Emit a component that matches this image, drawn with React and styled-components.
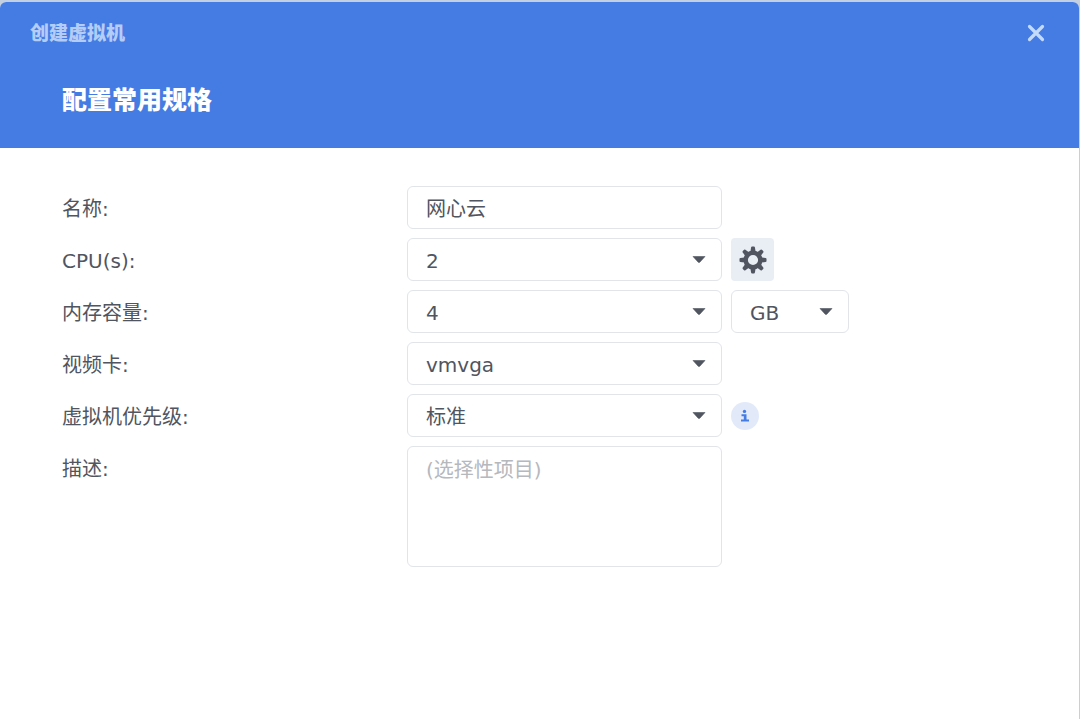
import React from 'react';
import styled, { createGlobalStyle } from 'styled-components';

const GlobalStyle = createGlobalStyle`
  *, *::before, *::after { box-sizing: border-box; }
  body {
    margin: 0;
    background: #c3d0e2;
    color: #505560;
    font-family: "DejaVu Sans", "Noto Sans CJK SC", sans-serif;
    font-size: 20px;
    line-height: 28px;
  }
  button, input, select, textarea { font: inherit; color: inherit; margin: 0; }
`;

const Backdrop = styled.div`
  display: flex;
  min-height: 100vh;
  padding: 2px 1px 0 0;
`;

const Dialog = styled.section`
  flex: 1;
  background: #fff;
  border-radius: 6px 6px 0 0;
  overflow: hidden;
`;

const Header = styled.header`
  background: #457ce3;
  padding: 15px 30px 30px;
`;

const TitleBar = styled.div`
  display: flex;
  align-items: center;
  justify-content: space-between;
  height: 32px;
`;

const DialogTitle = styled.h1`
  margin: 0;
  font-size: 19px;
  font-weight: 900;
  color: #b4cdf7;
`;

const CloseButton = styled.button`
  display: grid;
  place-items: center;
  width: 26px;
  height: 28px;
  padding: 0;
  border: 0;
  background: none;
  cursor: pointer;
`;

const StepTitle = styled.h2`
  margin: 35px 0 0 32px;
  font-size: 25px;
  line-height: 34px;
  font-weight: 900;
  color: #fff;
`;

const Form = styled.form`
  display: flex;
  flex-direction: column;
  gap: 9px;
  padding: 38px 62px;
`;

const Row = styled.div`
  display: flex;
  align-items: flex-start;
  gap: 9px;
`;

const Label = styled.label`
  width: 336px;
  padding: 9px 0 6px;
`;

const box = `
  width: 100%;
  border: 1px solid #e1e4e9;
  border-radius: 6px;
  background: #fff;
  outline: none;
`;

const TextInput = styled.input`
  ${box}
  display: block;
  height: 43px;
  padding: 0 18px;
`;

const TextArea = styled.textarea`
  ${box}
  display: block;
  height: 121px;
  padding: 9px 18px;
  resize: none;
  &::placeholder { color: #b5b8bd; opacity: 1; }
`;

const Field = styled.div`
  position: relative;
  width: ${(p) => (p.$small ? '118px' : '315px')};
`;

const NativeSelect = styled.select`
  ${box}
  display: block;
  height: 43px;
  padding: 2px 36px 0 18px;
  appearance: none;
`;

const Caret = styled.svg`
  position: absolute;
  top: 18px;
  right: 16px;
  pointer-events: none;
`;

const GearButton = styled.button`
  display: grid;
  place-items: center;
  width: 43px;
  height: 43px;
  padding: 0;
  border: 0;
  border-radius: 4px;
  background: #e9edf4;
  cursor: pointer;
`;

const InfoButton = styled.button`
  display: grid;
  place-items: center;
  align-self: center;
  width: 28px;
  height: 28px;
  padding: 0;
  border: 0;
  border-radius: 50%;
  background: #e2eafa;
  cursor: pointer;
`;

function Select({ id, options, small, label }) {
  return (
    <Field $small={small}>
      <NativeSelect id={id} aria-label={label} defaultValue={options[0]}>
        {options.map((o) => <option key={o}>{o}</option>)}
      </NativeSelect>
      <Caret width="14" height="7" viewBox="0 0 14 7" aria-hidden="true">
        <path d="M1 0.500h12L8 6Q7 7 6 6Z" fill="#505560" stroke="#505560" strokeWidth="0.600" strokeLinejoin="round" />
      </Caret>
    </Field>
  );
}

function GearIcon() {
  return (
    <svg width="28" height="28" viewBox="-14 -14 28 28" aria-hidden="true">
      <circle r="7.300" fill="none" stroke="#505560" strokeWidth="4.400" />
      {[0, 45, 90, 135, 180, 225, 270, 315].map((a) => (
        <path
          key={a}
          d="M-2.600 -8.500L-1.900 -12.600Q-1.700 -13.500 -0.900 -13.500H0.900Q1.700 -13.500 1.900 -12.600L2.600 -8.500Z"
          fill="#505560"
          transform={`rotate(${a})`}
        />
      ))}
    </svg>
  );
}

export default function App() {
  return (
    <>
      <GlobalStyle />
      <Backdrop>
        <Dialog role="dialog" aria-labelledby="dialog-title">
          <Header>
            <TitleBar>
              <DialogTitle id="dialog-title">创建虚拟机</DialogTitle>
              <CloseButton type="button" aria-label="关闭">
                <svg width="18" height="18" viewBox="0 0 18 18" aria-hidden="true">
                  <path d="M2.500 2.500L15.500 15.500M15.500 2.500L2.500 15.500" stroke="#c4dafb" strokeWidth="3.200" strokeLinecap="round" />
                </svg>
              </CloseButton>
            </TitleBar>
            <StepTitle>配置常用规格</StepTitle>
          </Header>
          <Form>
            <Row>
              <Label htmlFor="name">名称:</Label>
              <Field><TextInput id="name" type="text" defaultValue="网心云" /></Field>
            </Row>
            <Row>
              <Label htmlFor="cpu">CPU(s):</Label>
              <Select id="cpu" options={['2']} />
              <GearButton type="button" aria-label="CPU"><GearIcon /></GearButton>
            </Row>
            <Row>
              <Label htmlFor="memory">内存容量:</Label>
              <Select id="memory" options={['4']} />
              <Select id="unit" label="GB" options={['GB']} small />
            </Row>
            <Row>
              <Label htmlFor="video">视频卡:</Label>
              <Select id="video" options={['vmvga']} />
            </Row>
            <Row>
              <Label htmlFor="priority">虚拟机优先级:</Label>
              <Select id="priority" options={['标准']} />
              <InfoButton type="button" aria-label="信息">
                <svg width="10" height="14" viewBox="0 0 10 14" aria-hidden="true">
                  <circle cx="4.500" cy="2.400" r="1.700" fill="#457ce3" />
                  <path d="M1.500 5.200h5v5.400H9v2H1v-2h2.800V7.200H1.500Z" fill="#457ce3" />
                </svg>
              </InfoButton>
            </Row>
            <Row>
              <Label htmlFor="description">描述:</Label>
              <Field><TextArea id="description" placeholder="(选择性项目)" /></Field>
            </Row>
          </Form>
        </Dialog>
      </Backdrop>
    </>
  );
}
